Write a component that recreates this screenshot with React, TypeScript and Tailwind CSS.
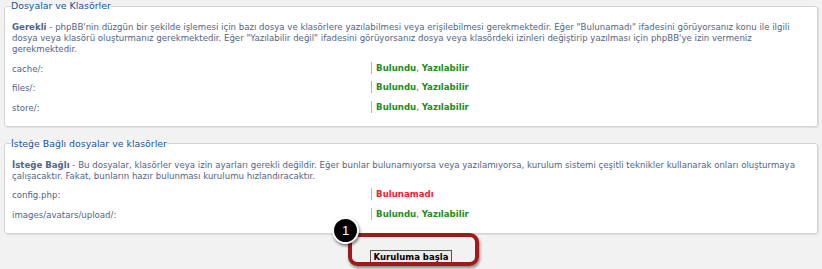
import type { ReactNode } from 'react';

interface Row {
  label: string;
  status: 'ok' | 'missing';
}

const requiredRows: Row[] = [
  { label: 'cache/:', status: 'ok' },
  { label: 'files/:', status: 'ok' },
  { label: 'store/:', status: 'ok' },
];

const optionalRows: Row[] = [
  { label: 'config.php:', status: 'missing' },
  { label: 'images/avatars/upload/:', status: 'ok' },
];

function Status({ status }: { status: Row['status'] }) {
  if (status === 'missing') {
    return <strong className="text-[#ee1c2e]">Bulunamadı</strong>;
  }
  return (
    <>
      <strong className="text-[#228b22]">Bulundu</strong>
      <span className="text-[#536482]">, </span>
      <strong className="text-[#228b22]">Yazılabilir</strong>
    </>
  );
}

function Section({ title, children, rows }: { title: string; children: ReactNode; rows: Row[] }) {
  return (
    <fieldset className="border border-[#d4d4d4] rounded-[3px] bg-white px-[7px] pb-[9px] shadow-[1px_1px_1px_rgba(0,0,0,0.08)]">
      <legend className="px-0 -ml-[1px] text-[9.4px] leading-[12px] text-[#115098]">{title}</legend>
      <p className="mt-[10px] text-[8.6px] leading-[11px] text-[#536482]">{children}</p>
      <dl className="mt-[3px] text-[8.6px] text-[#536482]">
        {rows.map((row) => (
          <div key={row.label} className="flex items-center h-[19.5px]">
            <dt className="w-[45%] pt-[3px]">{row.label}</dt>
            <dd className="border-l border-[#b5b5b5] pl-[4px] leading-[12px]">
              <Status status={row.status} />
            </dd>
          </div>
        ))}
      </dl>
    </fieldset>
  );
}

export default function App() {
  return (
    <div className="relative w-[822px] h-[269px] overflow-hidden bg-[#f2f2f2] px-[4px] font-['DejaVu_Sans',Verdana,sans-serif]">
      <Section title="Dosyalar ve Klasörler" rows={requiredRows}>
        <strong>Gerekli</strong> - phpBB'nin düzgün bir şekilde işlemesi için bazı dosya ve klasörlere yazılabilmesi
        veya erişilebilmesi gerekmektedir. Eğer "Bulunamadı" ifadesini görüyorsanız konu ile ilgili dosya veya klasörü
        oluşturmanız gerekmektedir. Eğer "Yazılabilir değil" ifadesini görüyorsanız dosya veya klasördeki izinleri
        değiştirip yazılması için phpBB'ye izin vermeniz gerekmektedir.
      </Section>

      <div className="mt-[11px]">
        <Section title="İsteğe Bağlı dosyalar ve klasörler" rows={optionalRows}>
          <strong>İsteğe Bağlı</strong> - Bu dosyalar, klasörler veya izin ayarları gerekli değildir. Eğer bunlar
          bulunamıyorsa veya yazılamıyorsa, kurulum sistemi çeşitli teknikler kullanarak onları oluşturmaya
          çalışacaktır. Fakat, bunların hazır bulunması kurulumu hızlandıracaktır.
        </Section>
      </div>

      <div className="flex justify-center mt-[16px]">
        <button className="h-[14px] px-[3px] border border-[#555] bg-[#ececec] text-[8.5px] font-bold leading-[12px] text-black">
          Kuruluma başla
        </button>
      </div>

      {/* callout */}
      <div className="absolute left-[348px] top-[233px] w-[131px] h-[33px] rounded-[9px] border-[4px] border-[#9e1b1b] shadow-[1px_2px_3px_rgba(0,0,0,0.45)]" />
      <div className="absolute left-[332px] top-[217px] w-[27px] h-[27px] rounded-full bg-black border-[2px] border-white shadow-[1px_2px_3px_rgba(0,0,0,0.5)] flex items-center justify-center text-white text-[13px] font-['Liberation_Sans',sans-serif] leading-none">
        1
      </div>
    </div>
  );
}
